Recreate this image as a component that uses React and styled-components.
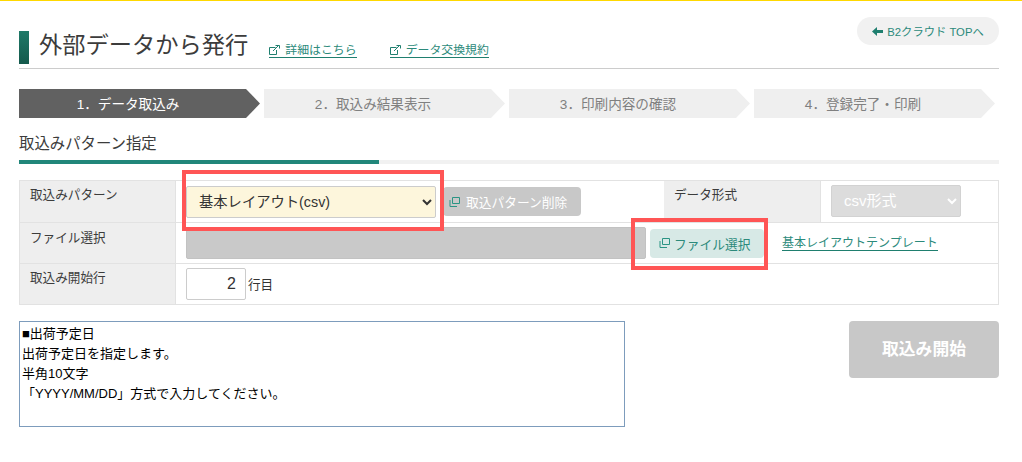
import React from "react";
import styled, { createGlobalStyle } from "styled-components";

const GlobalStyle = createGlobalStyle`
  html, body { margin: 0; padding: 0; background: #fff; }
  body {
    font-family: "Liberation Sans", "Noto Sans CJK JP", sans-serif;
    color: #333;
  }
`;

const Page = styled.div`
  position: relative;
  width: 1022px;
  height: 462px;
  box-sizing: border-box;
  border-top: 1px solid #ffd800;
  padding: 0 23px 0 19px;
  overflow: hidden;
`;

const TopRow = styled.div`
  display: flex;
  justify-content: flex-end;
  height: 16px;
  padding-top: 16px;
`;

const BackLink = styled.a`
  display: flex;
  align-items: center;
  justify-content: center;
  gap: 4px;
  width: 142px;
  height: 28px;
  margin-bottom: -28px;
  border-radius: 14px;
  background: #f1f1f1;
  color: #2c8a7b;
  font-size: 11.3px;
`;

const Header = styled.div`
  display: flex;
  align-items: flex-end;
  height: 34px;
  margin-top: -3px;
  padding-bottom: 4px;
  border-bottom: 1px solid #ccc;
`;

const TitleMark = styled.span`
  width: 10px;
  height: 33px;
  margin-right: 10px;
  background: linear-gradient(#1f7a68, #14594c);
`;

const Title = styled.h1`
  margin: 0 21px 2px 0;
  font-size: 23.25px;
  font-weight: 400;
  line-height: 33px;
  color: #3c3c3c;
`;

const HeaderLink = styled.a`
  display: flex;
  align-items: center;
  gap: 5px;
  margin: 0 ${(p) => p.$gap}px 6px 0;
  color: #2c8a7b;
  font-size: 11.9px;
  line-height: 14px;
  border-bottom: 1px solid #1f7f6f;
`;

const Steps = styled.ol`
  display: flex;
  gap: 4px;
  margin: 20px 0 0;
  padding: 0;
  list-style: none;
`;

const Step = styled.li`
  width: 241px;
  height: 29px;
  padding-right: 23px;
  box-sizing: border-box;
  background: ${(p) => (p.$active ? "#616161" : "#efefef")};
  color: ${(p) => (p.$active ? "#fff" : "#808080")};
  font-size: 13.6px;
  line-height: 31px;
  text-align: center;
  clip-path: polygon(0 0, calc(100% - 14px) 0, 100% 50%, calc(100% - 14px) 100%, 0 100%);
`;

const SectionTitle = styled.h2`
  margin: 15px 0 0;
  font-size: 15.4px;
  font-weight: 400;
  line-height: 22px;
  color: #3c3c3c;
`;

const SectionBar = styled.div`
  height: 4px;
  margin-top: 5px;
  background: linear-gradient(to right, #21867a 360px, #f1f1f1 360px);
`;

const FormTable = styled.div`
  display: grid;
  grid-template-columns: 156px 488px 157px 1fr;
  grid-template-rows: 42px 41px 41px;
  margin-top: 16px;
  border: 1px solid #e2e2e2;
  border-width: 1px 1px 0 1px;
`;

const Head = styled.div`
  padding: ${(p) => p.$top ?? 5}px 10px 0;
  background: #eee;
  border-right: 1px solid #e2e2e2;
  border-bottom: 1px solid #e2e2e2;
  font-size: 12.6px;
  line-height: 18px;
  color: #3c3c3c;
`;

const Cell = styled.div`
  display: flex;
  align-items: center;
  grid-column: ${(p) => p.$span || "auto"};
  padding-left: 10px;
  border-bottom: 1px solid #e2e2e2;
`;

const PatternSelect = styled.select`
  width: 250px;
  height: 32px;
  padding: 0 8px;
  box-sizing: border-box;
  background-color: #fdf6dc;
  border: 1px solid #ccc;
  border-radius: 2px;
  font-family: inherit;
  font-size: 14.3px;
  color: #333;
`;

const FormatSelect = styled(PatternSelect)`
  width: 130px;
  margin-bottom: 2px;
  background-color: #dcdcdc;
  border-color: #d2d2d2;
  font-size: 15px;
  color: #fff;
  opacity: 1;
`;

const ActionButton = styled.button`
  display: flex;
  align-items: center;
  gap: ${(p) => (p.$on ? 4 : 6)}px;
  width: ${(p) => p.$w}px;
  height: 29px;
  margin-left: ${(p) => p.$ml}px;
  padding: 0 0 0 ${(p) => (p.$on ? 9 : 6)}px;
  border: 0;
  border-radius: 4px;
  background: ${(p) => (p.$on ? "#d7e9e6" : "#c8c8c8")};
  color: ${(p) => (p.$on ? "#2c8a7b" : "#fff")};
  font-family: inherit;
  font-size: 12.75px;
`;

const FileField = styled.div`
  width: 460px;
  height: 32px;
  box-sizing: border-box;
  background: #c9c9c9;
  border: 1px solid #c2c2c2;
  border-radius: 2px;
`;

const TemplateLink = styled.a`
  margin-left: 18px;
  color: #2c8a7b;
  font-size: 12px;
  line-height: 14px;
  border-bottom: 1px solid #1f7f6f;
`;

const LineInput = styled.input`
  width: 60px;
  height: 32px;
  box-sizing: border-box;
  padding: 0 9px;
  border: 1px solid #ccc;
  border-radius: 2px;
  font-family: inherit;
  font-size: 16px;
  color: #333;
  text-align: right;
`;

const Unit = styled.span`
  margin: 0 0 2px 2px;
  font-size: 12.6px;
  color: #333;
`;

const Bottom = styled.div`
  display: flex;
  justify-content: space-between;
  align-items: flex-start;
  margin-top: 16px;
`;

const Note = styled.textarea`
  display: block;
  width: 606px;
  height: 106px;
  box-sizing: border-box;
  padding: 2px;
  border: 1px solid #7d9cbc;
  border-radius: 0;
  resize: none;
  font-family: "Liberation Sans", "Noto Sans CJK JP", sans-serif;
  font-size: 13px;
  line-height: 20px;
  color: #000;
`;

const StartButton = styled.button`
  width: 150px;
  height: 57px;
  padding: 0 0 4px;
  border: 0;
  border-radius: 4px;
  background: #c8c8c8;
  color: #fff;
  font-family: inherit;
  font-size: 16.8px;
  font-weight: 700;
`;

// red annotation frames drawn over the form
const Callout = styled.div`
  position: absolute;
  left: ${(p) => p.$x}px;
  top: ${(p) => p.$y}px;
  width: ${(p) => p.$w}px;
  height: ${(p) => p.$h}px;
  box-sizing: border-box;
  border: 4px solid #ff5555;
`;

const ExternalIcon = () => (
  <svg width="11" height="10" viewBox="0 0 11 10" fill="none" stroke="#1f7f6f" strokeWidth="1">
    <path d="M6.5 2.5H.5v7h7V5" />
    <path d="M4 6 9 1M6.5.5h4v3" />
  </svg>
);

const WindowIcon = () => (
  <svg width="11" height="10" viewBox="0 0 11 10" fill="none" stroke="#2a9484" strokeWidth="1">
    <path d="M3.5.5h7v6h-7z" />
    <path d="M1 3v6.5h7" />
  </svg>
);

const BackIcon = () => (
  <svg width="11" height="9" viewBox="0 0 11 9" fill="#1f7f6f">
    <path d="M0 4.5 5 0v3h6v3H5v3z" />
  </svg>
);

const NOTE_TEXT = `■出荷予定日
出荷予定日を指定します。
半角10文字
「YYYY/MM/DD」方式で入力してください。`;

const STEPS = ["1．データ取込み", "2．取込み結果表示", "3．印刷内容の確認", "4．登録完了・印刷"];

export default function App() {
  return (
    <Page>
      <GlobalStyle />
      <TopRow>
        <BackLink>
          <BackIcon /> B2クラウド TOPへ
        </BackLink>
      </TopRow>
      <Header>
        <TitleMark />
        <Title>外部データから発行</Title>
        <HeaderLink $gap={33}>
          <ExternalIcon /> 詳細はこちら
        </HeaderLink>
        <HeaderLink $gap={0}>
          <ExternalIcon /> データ交換規約
        </HeaderLink>
      </Header>
      <Steps>
        {STEPS.map((s, i) => (
          <Step key={s} $active={i === 0}>
            {s}
          </Step>
        ))}
      </Steps>
      <SectionTitle>取込みパターン指定</SectionTitle>
      <SectionBar />
      <FormTable>
        <Head>取込みパターン</Head>
        <Cell>
          <PatternSelect defaultValue="basic">
            <option value="basic">基本レイアウト(csv)</option>
          </PatternSelect>
          <ActionButton $w={138} $ml={7}>
            <WindowIcon /> 取込パターン削除
          </ActionButton>
        </Cell>
        <Head>データ形式</Head>
        <Cell>
          <FormatSelect disabled defaultValue="csv">
            <option value="csv">csv形式</option>
          </FormatSelect>
        </Cell>

        <Head $top={6}>ファイル選択</Head>
        <Cell $span="2 / -1">
          <FileField />
          <ActionButton $w={114} $ml={4} $on>
            <WindowIcon /> ファイル選択
          </ActionButton>
          <TemplateLink>基本レイアウトテンプレート</TemplateLink>
        </Cell>

        <Head>取込み開始行</Head>
        <Cell $span="2 / -1">
          <LineInput defaultValue="2" />
          <Unit>行目</Unit>
        </Cell>
      </FormTable>
      <Bottom>
        <Note readOnly value={NOTE_TEXT} />
        <StartButton>取込み開始</StartButton>
      </Bottom>
      <Callout $x={182} $y={169} $w={262} $h={61} />
      <Callout $x={631} $y={217} $w={137} $h={52} />
    </Page>
  );
}
